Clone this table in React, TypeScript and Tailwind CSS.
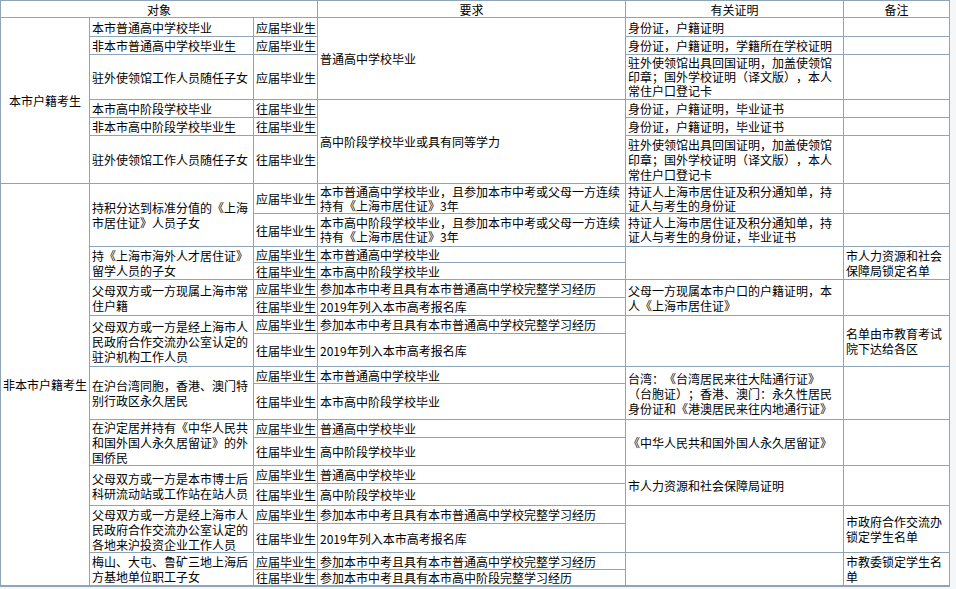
import { type ReactElement, type ReactNode } from 'react'

const B = 'border border-[#8ea4b8]'

interface CellProps {
  readonly children?: ReactNode
  readonly rs?: number
  readonly center?: boolean
  readonly nowrap?: boolean
  readonly tight?: boolean
}

function C({ children, rs, center, nowrap, tight }: CellProps): ReactElement {
  return (
    <td
      rowSpan={rs}
      className={`${B} px-[2px] py-0 align-middle ${center ? 'text-center' : 'text-left'} ${nowrap ? 'whitespace-nowrap overflow-hidden' : ''} ${tight ? 'leading-[14px]' : ''}`}
    >
      {children}
    </td>
  )
}

function YJ(): ReactElement {
  return <C nowrap>应届毕业生</C>
}

function WJ(): ReactElement {
  return <C nowrap>往届毕业生</C>
}

const ZWCERT = '驻外使领馆出具回国证明，加盖使领馆印章；国外学校证明（译文版），本人常住户口登记卡'
const ZK_PT = '参加本市中考且具有本市普通高中学校完整学习经历'
const BMK = '2019年列入本市高考报名库'

export default function App(): ReactElement {
  return (
    <div className="h-[589px] w-[956px] overflow-hidden bg-[#f4f6f8]">
      <table className="w-[949px] table-fixed border-collapse border-b-2 border-b-[#8ea4b8] bg-white font-['Noto_Sans_CJK_SC',sans-serif] text-[12px] leading-[15px] text-black [text-spacing-trim:space-all]">
        <colgroup>
          <col className="w-[89px]" />
          <col className="w-[164px]" />
          <col className="w-[64px]" />
          <col className="w-[308px]" />
          <col className="w-[218px]" />
          <col className="w-[106px]" />
        </colgroup>
        <tbody>
          {/* header */}
          <tr className="h-[17px]">
            <th colSpan={3} className={`${B} p-0 font-normal`}>对象</th>
            <th className={`${B} p-0 font-normal`}>要求</th>
            <th className={`${B} p-0 font-normal`}>有关证明</th>
            <th className={`${B} p-0 font-normal`}>备注</th>
          </tr>

          {/* 本市户籍考生 */}
          <tr className="h-[19px]">
            <C rs={6} center>本市户籍考生</C>
            <C>本市普通高中学校毕业</C>
            <YJ />
            <C rs={3}>普通高中学校毕业</C>
            <C>身份证，户籍证明</C>
            <C />
          </tr>
          <tr className="h-[18px]">
            <C>非本市普通高中学校毕业生</C>
            <YJ />
            <C>身份证，户籍证明，学籍所在学校证明</C>
            <C />
          </tr>
          <tr className="h-[45px]">
            <C>驻外使领馆工作人员随任子女</C>
            <YJ />
            <C tight>{ZWCERT}</C>
            <C />
          </tr>
          <tr className="h-[18px]">
            <C>本市高中阶段学校毕业</C>
            <WJ />
            <C rs={3}>高中阶段学校毕业或具有同等学力</C>
            <C>身份证，户籍证明，毕业证书</C>
            <C />
          </tr>
          <tr className="h-[18px]">
            <C>非本市高中阶段学校毕业生</C>
            <WJ />
            <C>身份证，户籍证明，毕业证书</C>
            <C />
          </tr>
          <tr className="h-[48px]">
            <C>驻外使领馆工作人员随任子女</C>
            <WJ />
            <C>{ZWCERT}</C>
            <C />
          </tr>

          {/* 非本市户籍考生 */}
          <tr className="h-[30px]">
            <C rs={18} center>非本市户籍考生</C>
            <C rs={2}>持积分达到标准分值的《上海市居住证》人员子女</C>
            <YJ />
            <C tight>本市普通高中学校毕业，且参加本市中考或父母一方连续持有《上海市居住证》3年</C>
            <C tight>持证人上海市居住证及积分通知单，持证人与考生的身份证</C>
            <C />
          </tr>
          <tr className="h-[33px]">
            <WJ />
            <C tight>本市高中阶段学校毕业，且参加本市中考或父母一方连续持有《上海市居住证》3年</C>
            <C tight>持证人上海市居住证及积分通知单，持证人与考生的身份证，毕业证书</C>
            <C />
          </tr>

          <tr className="h-[16px]">
            <C rs={2}>持《上海市海外人才居住证》留学人员的子女</C>
            <YJ />
            <C>本市普通高中学校毕业</C>
            <C rs={2} />
            <C rs={2}>市人力资源和社会保障局锁定名单</C>
          </tr>
          <tr className="h-[17px]">
            <WJ />
            <C>本市高中阶段学校毕业</C>
          </tr>

          <tr className="h-[18px]">
            <C rs={2}>父母双方或一方现属上海市常住户籍</C>
            <YJ />
            <C>{ZK_PT}</C>
            <C rs={2}>父母一方现属本市户口的户籍证明，本人《上海市居住证》</C>
            <C rs={2} />
          </tr>
          <tr className="h-[18px]">
            <WJ />
            <C>{BMK}</C>
          </tr>

          <tr className="h-[18px]">
            <C rs={2}>父母双方或一方是经上海市人民政府合作交流办公室认定的驻沪机构工作人员</C>
            <YJ />
            <C>{ZK_PT}</C>
            <C rs={2} />
            <C rs={2}>名单由市教育考试院下达给各区</C>
          </tr>
          <tr className="h-[33px]">
            <WJ />
            <C>{BMK}</C>
          </tr>

          <tr className="h-[17px]">
            <C rs={2}>在沪台湾同胞，香港、澳门特别行政区永久居民</C>
            <YJ />
            <C>本市普通高中学校毕业</C>
            <C rs={2}>台湾：《台湾居民来往大陆通行证》（台胞证）；香港、澳门：永久性居民身份证和《港澳居民来往内地通行证》</C>
            <C rs={2} />
          </tr>
          <tr className="h-[36px]">
            <WJ />
            <C>本市高中阶段学校毕业</C>
          </tr>

          <tr className="h-[18px]">
            <C rs={2}>在沪定居并持有《中华人民共和国外国人永久居留证》的外国侨民</C>
            <YJ />
            <C>普通高中学校毕业</C>
            <C rs={2}>《中华人民共和国外国人永久居留证》</C>
            <C rs={2} />
          </tr>
          <tr className="h-[28px]">
            <WJ />
            <C>高中阶段学校毕业</C>
          </tr>

          <tr className="h-[18px]">
            <C rs={2}>父母双方或一方是本市博士后科研流动站或工作站在站人员</C>
            <YJ />
            <C>普通高中学校毕业</C>
            <C rs={2}>市人力资源和社会保障局证明</C>
            <C rs={2} />
          </tr>
          <tr className="h-[22px]">
            <WJ />
            <C>高中阶段学校毕业</C>
          </tr>

          <tr className="h-[18px]">
            <C rs={2}>父母双方或一方是经上海市人民政府合作交流办公室认定的各地来沪投资企业工作人员</C>
            <YJ />
            <C>{ZK_PT}</C>
            <C rs={2} />
            <C rs={2}>市政府合作交流办锁定学生名单</C>
          </tr>
          <tr className="h-[29px]">
            <WJ />
            <C>{BMK}</C>
          </tr>

          <tr className="h-[17px]">
            <C rs={2}>梅山、大屯、鲁矿三地上海后方基地单位职工子女</C>
            <YJ />
            <C>{ZK_PT}</C>
            <C rs={2} />
            <C rs={2}>市教委锁定学生名单</C>
          </tr>
          <tr className="h-[16px]">
            <WJ />
            <C>参加本市中考且具有本市高中阶段完整学习经历</C>
          </tr>
        </tbody>
      </table>
    </div>
  )
}
